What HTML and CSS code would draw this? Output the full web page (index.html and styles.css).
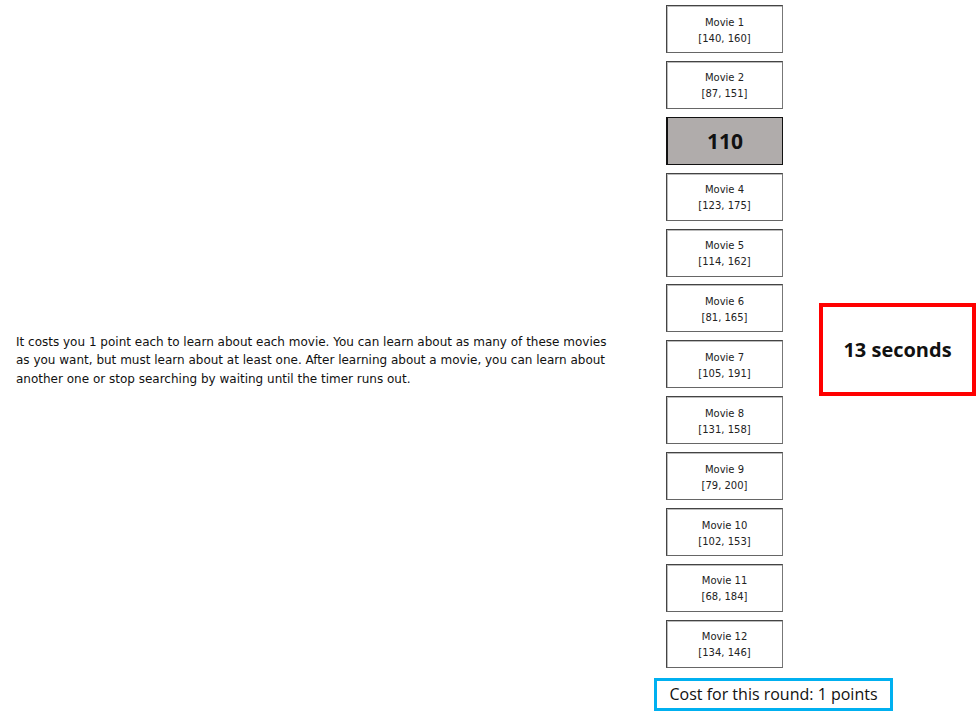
FILE: index.html
```html
<!DOCTYPE html>
<html>
<head>
<meta charset="utf-8">
<link rel="stylesheet" href="styles.css">
</head>
<body>
<div class="page">
  <div class="left">
    <p class="instructions">It costs you 1 point each to learn about each movie. You can learn about as many of these movies as you want, but must learn about at least one. After learning about a movie, you can learn about another one or stop searching by waiting until the timer runs out.</p>
  </div>
  <div class="middle">
    <div class="list">
      <div class="movie"><span>Movie 1</span><span>[140, 160]</span></div>
      <div class="movie"><span>Movie 2</span><span>[87, 151]</span></div>
      <div class="movie selected"><span class="value">110</span></div>
      <div class="movie"><span>Movie 4</span><span>[123, 175]</span></div>
      <div class="movie"><span>Movie 5</span><span>[114, 162]</span></div>
      <div class="movie"><span>Movie 6</span><span>[81, 165]</span></div>
      <div class="movie"><span>Movie 7</span><span>[105, 191]</span></div>
      <div class="movie"><span>Movie 8</span><span>[131, 158]</span></div>
      <div class="movie"><span>Movie 9</span><span>[79, 200]</span></div>
      <div class="movie"><span>Movie 10</span><span>[102, 153]</span></div>
      <div class="movie"><span>Movie 11</span><span>[68, 184]</span></div>
      <div class="movie"><span>Movie 12</span><span>[134, 146]</span></div>
    </div>
    <div class="cost">Cost for this round: 1 points</div>
  </div>
  <div class="right">
    <div class="timer">13 seconds</div>
  </div>
</div>
</body>
</html>
```

FILE: styles.css
```css
html, body {
  margin: 0;
  padding: 0;
  background: #ffffff;
}
.page {
  display: flex;
  width: 977px;
  height: 711px;
  overflow: hidden;
}
.left {
  width: 654px;
  flex: none;
  display: flex;
  align-items: center;
  padding-top: 10px;
  box-sizing: border-box;
}
.instructions {
  margin: 0 0 0 16px;
  width: 600px;
  font-family: "DejaVu Sans", Verdana, sans-serif;
  font-size: 12px;
  line-height: 18.5px;
  color: #111;
}
.middle {
  width: 165px;
  flex: none;
  display: flex;
  flex-direction: column;
  align-items: flex-start;
}
.list {
  display: flex;
  flex-direction: column;
  gap: 7.9px;
  margin: 5px 0 0 12px;
}
.movie {
  width: 117px;
  height: 48px;
  box-sizing: border-box;
  padding-top: 3px;
  border: 1px solid #444;
  border-right-color: #777;
  border-bottom-color: #666;
  box-shadow: inset 1px 1px 0 #bbb;
  background: #fff;
  display: flex;
  flex-direction: column;
  align-items: center;
  justify-content: center;
  font-family: "DejaVu Sans", Tahoma, sans-serif;
  font-size: 10px;
  line-height: 16px;
  color: #222;
}
.movie.selected {
  background: #b0acab;
  border: 1px solid #111;
  border-left-width: 2px;
  box-shadow: none;
  padding-top: 1px;
}
.movie .value {
  font-family: "Open Sans", sans-serif;
  font-weight: 700;
  font-size: 21px;
  color: #111;
}
.cost {
  margin-top: 10px;
  width: 239px;
  height: 33px;
  box-sizing: border-box;
  border: 3px solid #00b0f0;
  display: flex;
  align-items: center;
  justify-content: center;
  font-family: "Open Sans", sans-serif;
  font-size: 16px;
  color: #111;
  white-space: nowrap;
}
.right {
  flex: none;
  padding-top: 303px;
}
.timer {
  width: 157px;
  height: 93px;
  box-sizing: border-box;
  border: 4px solid #ff0000;
  display: flex;
  align-items: center;
  justify-content: center;
  font-family: "Open Sans", sans-serif;
  font-weight: 700;
  font-size: 20px;
  color: #111;
}
```
